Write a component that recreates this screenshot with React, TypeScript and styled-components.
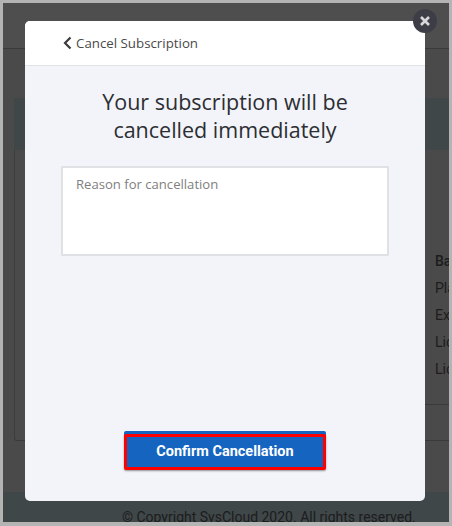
import React from 'react';
import styled, { createGlobalStyle } from 'styled-components';

const GlobalStyle = createGlobalStyle`
    html, body {
        margin: 0;
        padding: 0;
    }
    body {
        width: 452px;
        height: 526px;
        overflow: hidden;
        background: #fff;
    }
`;

const Frame = styled.div`
    position: relative;
    box-sizing: border-box;
    width: 452px;
    height: 526px;
    border: solid #b4b4b4;
    border-width: 3px 3px 4px 3px;
    overflow: hidden;
`;

const Page = styled.div`
    height: 100%;
    display: flex;
    flex-direction: column;
    background: #4a4a4a;
    color: #1c1c1c;
    font-family: Roboto, sans-serif;
`;

const TopBar = styled.div`
    height: 45px;
    flex: none;
    background: #4e4e4e;
    border-bottom: 1px solid #3a3a3a;
`;

const Content = styled.div`
    flex: 1;
    padding: 49px 0 0 11px;
`;

const Banner = styled.div`
    height: 52px;
    background: #3f4749;
    border-radius: 2px 0 0 2px;
`;

const Card = styled.div`
    box-sizing: border-box;
    height: 291px;
    border-left: 1px solid #3d3d3d;
    border-bottom: 1px solid #3a3a3a;
    border-radius: 0 0 0 3px;
    padding-top: 101px;
    overflow: hidden;
`;

const DetailTitle = styled.div`
    margin: 0 0 7px 420px;
    font-size: 14px;
    font-weight: 500;
    line-height: 20px;
    white-space: nowrap;
`;

const DetailRow = styled.div`
    margin: 0 0 7px 420px;
    font-size: 14px;
    line-height: 20px;
    white-space: nowrap;
`;

const Divider = styled.div`
    height: 1px;
    margin: 25px 0 0 100px;
    background: #3a3a3a;
`;

const Footer = styled.div`
    height: 30px;
    flex: none;
    box-sizing: border-box;
    background: #3f4749;
    padding: 17px 0 0 119px;
    font-size: 14px;
    line-height: 16px;
    white-space: nowrap;
    overflow: hidden;
`;

const Modal = styled.div`
    position: absolute;
    left: 22px;
    top: 18px;
    width: 400px;
    height: 480px;
    display: flex;
    flex-direction: column;
    border-radius: 5px;
    overflow: hidden;
    background: #f3f4f9;
`;

const ModalHeader = styled.div`
    height: 44px;
    flex: none;
    display: flex;
    align-items: center;
    gap: 4px;
    padding-left: 38px;
    background: #fff;
    border-bottom: 1px solid #e2e3e6;
    font-family: "Open Sans", sans-serif;
    font-size: 13.3px;
    color: #4a4a4a;
`;

const ModalBody = styled.div`
    flex: 1;
    display: flex;
    flex-direction: column;
    align-items: center;
    padding: 22px 36px 31px;
`;

const Heading = styled.h2`
    margin: 0 0 22px;
    font-family: "Open Sans", sans-serif;
    font-size: 21.5px;
    font-weight: 400;
    line-height: 28px;
    text-align: center;
    color: #2b2e33;
`;

const Reason = styled.div`
    box-sizing: border-box;
    width: 328px;
    height: 90px;
    padding: 7px 13px;
    background: #fff;
    border: 2px solid #e0e1e4;
    border-radius: 1px;
    font-family: "Open Sans", sans-serif;
    font-size: 13.1px;
    color: #808080;
`;

const ConfirmButton = styled.button`
    box-sizing: border-box;
    width: 202px;
    height: 36px;
    margin-top: auto;
    padding: 0 0 2px;
    background: #1565c0;
    border: 3px solid #f00;
    border-radius: 2px;
    box-shadow: 0 -3px 0 #1565c0, 0 1px 2px rgba(0, 0, 0, .4);
    color: #fff;
    font-family: Roboto, sans-serif;
    font-size: 14.5px;
    font-weight: 700;
`;

const CloseButton = styled.div`
    position: absolute;
    left: 410px;
    top: 6px;
    width: 24px;
    height: 24px;
    display: flex;
    align-items: center;
    justify-content: center;
    border-radius: 50%;
    background: #3d3d47;
`;

export default function App() {
    return (
        <>
            <GlobalStyle />
            <Frame>
                <Page>
                    <TopBar />
                    <Content>
                        <Banner />
                        <Card>
                            <DetailTitle>Basic</DetailTitle>
                            <DetailRow>Plan</DetailRow>
                            <DetailRow>Expiry</DetailRow>
                            <DetailRow>Licenses</DetailRow>
                            <DetailRow>Licenses</DetailRow>
                            <Divider />
                        </Card>
                    </Content>
                    <Footer>© Copyright SysCloud 2020. All rights reserved.</Footer>
                </Page>
                <Modal>
                    <ModalHeader>
                        <svg width="9" height="14" viewBox="0 0 9 14">
                            <path d="M7.5 1.5 2 7l5.5 5.5" fill="none" stroke="#3a3a3a" strokeWidth="2.2" />
                        </svg>
                        Cancel Subscription
                    </ModalHeader>
                    <ModalBody>
                        <Heading>Your subscription will be<br />cancelled immediately</Heading>
                        <Reason>Reason for cancellation</Reason>
                        <ConfirmButton>Confirm Cancellation</ConfirmButton>
                    </ModalBody>
                </Modal>
                <CloseButton>
                    <svg width="12" height="12" viewBox="0 0 12 12">
                        <path d="M2 2l8 8M10 2l-8 8" fill="none" stroke="#d8d8dc" strokeWidth="2.6" />
                    </svg>
                </CloseButton>
            </Frame>
        </>
    );
}
